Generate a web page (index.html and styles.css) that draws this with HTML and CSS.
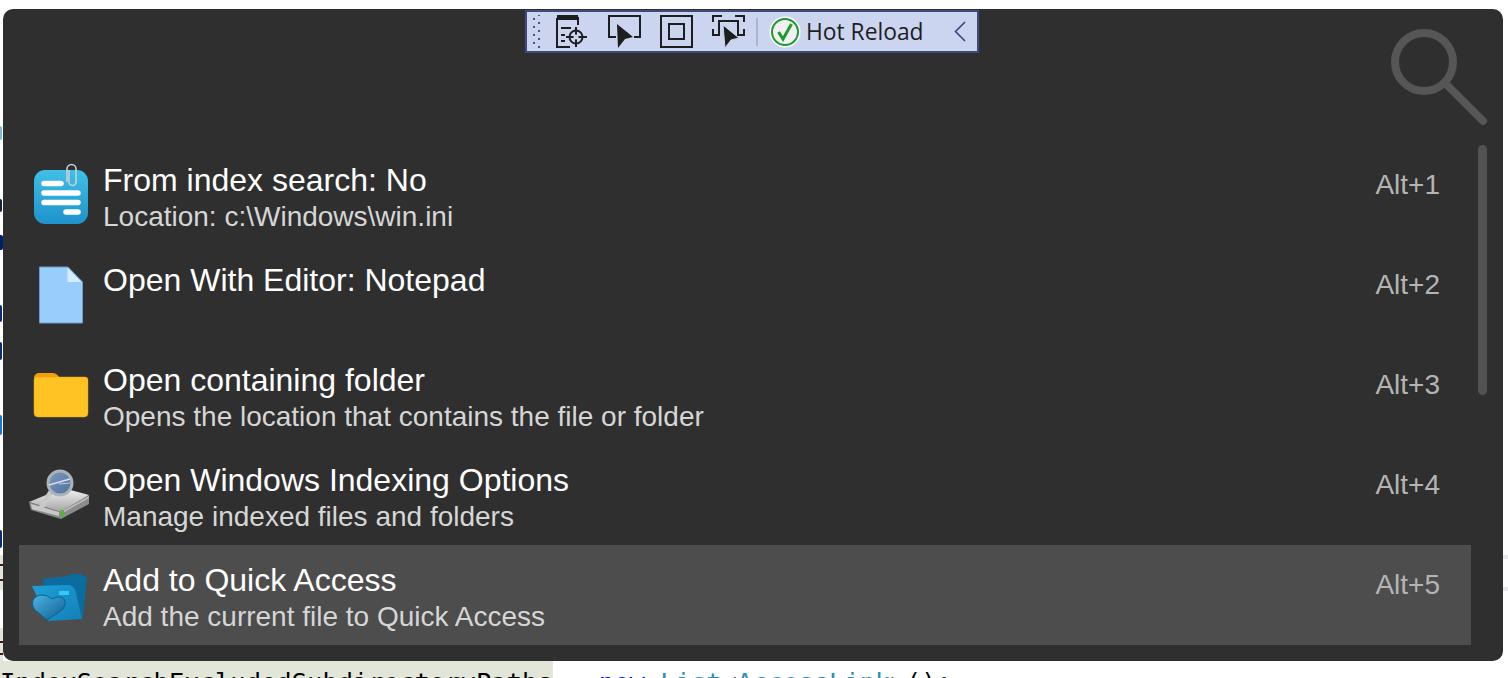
FILE: index.html
```html
<!DOCTYPE html>
<html lang="en">
<head>
<meta charset="utf-8">
<title>Flow Launcher</title>
<link rel="stylesheet" href="styles.css">
</head>
<body>
<div class="editor">
  <span class="frag f1"></span>
  <span class="frag f2"></span>
  <span class="frag f3"></span>
  <span class="frag f4"></span>
  <span class="frag f5"></span>
  <span class="frag f6"></span>
  <span class="frag f7"></span>
  <span class="hlblock h1"></span>
  <span class="hlblock h2"></span>
  <span class="mark m1"></span>
  <span class="mark m2"></span>
  <span class="mark m3"></span>
  <span class="mark m4"></span>
  <span class="rightmark r1"></span>
  <span class="rightmark r2"></span>
  <div class="codeline"><span class="hl">IndexSearchExcludedSubdirectoryPaths</span> = <span class="kw">new</span> <span class="ty">List</span>&lt;<span class="ty">AccessLink</span>&gt;();</div>
</div>

<main class="panel">
  <header class="head">
    <svg class="search" width="100" height="104" viewBox="0 0 100 104"><circle cx="36" cy="36" r="29" fill="none" stroke="#565656" stroke-width="8"/><path d="M59 59 95 95" stroke="#565656" stroke-width="8" stroke-linecap="round"/></svg>
  </header>
  <div class="body">
    <ul class="list">
      <li class="row">
        <span class="ico">
          <svg width="64" height="70" viewBox="0 0 64 70"><defs><linearGradient id="a" x1="0" y1="0" x2="0" y2="1"><stop offset="0" stop-color="#3fc0e6"/><stop offset="1" stop-color="#1f92cc"/></linearGradient></defs><rect x="6" y="10" width="54" height="54" rx="11" fill="url(#a)"/><g stroke="#fff" stroke-width="5.500" stroke-linecap="round"><path d="M16 23.500H33M16 33H50M16 42.500H50M38 52H50"/></g><path d="M39 22V9a4.500 4.500 0 0 1 9 0V22a3.500 3.500 0 0 1-7 0V10" fill="none" stroke="#c4d0d8" stroke-width="1.600"/></svg>
        </span>
        <div class="txt"><div class="title">From index search: No</div><div class="sub">Location: c:\Windows\win.ini</div></div>
        <span class="key">Alt+1</span>
      </li>
      <li class="row">
        <span class="ico">
          <svg width="64" height="70" viewBox="0 0 64 70"><path d="M11.500 7H40L54.500 22V63H11.500Z" fill="#99cdfb" stroke="#6f9cc4" stroke-width="1"/><path d="M39.500 8 53.500 22H39.500Z" fill="#d6ecff"/></svg>
        </span>
        <div class="txt"><div class="title">Open With Editor: Notepad</div><div class="sub">&nbsp;</div></div>
        <span class="key">Alt+2</span>
      </li>
      <li class="row">
        <span class="ico">
          <svg width="64" height="70" viewBox="0 0 64 70"><path d="M6 18a5 5 0 0 1 5-5h14q3 0 5 2.500l3 3.500H6Z" fill="#f59e0b"/><path d="M6 20a3 3 0 0 1 3-3H57a3 3 0 0 1 3 3V53a4 4 0 0 1-4 4H10a4 4 0 0 1-4-4Z" fill="#ffc423" stroke="#e0a21c" stroke-width=".5"/></svg>
        </span>
        <div class="txt"><div class="title">Open containing folder</div><div class="sub">Opens the location that contains the file or folder</div></div>
        <span class="key">Alt+3</span>
      </li>
      <li class="row">
        <span class="ico">
          <svg width="64" height="70" viewBox="0 0 64 70"><defs><linearGradient id="d" x1="0" y1="0" x2="0" y2="1"><stop offset="0" stop-color="#f4f4f4"/><stop offset="1" stop-color="#a4a4a4"/></linearGradient><linearGradient id="g" x1="0" y1="0" x2="1" y2="1"><stop offset="0" stop-color="#7f9cc0"/><stop offset="1" stop-color="#4f6f98"/></linearGradient></defs><path d="M1 42 35 28 61 35 33 52Z" fill="url(#d)"/><path d="M1 42 33 52 61 35 61 44 33 59 3 50Z" fill="#8b8b8b"/><path d="M3 44 31 52 31 56 4 49Z" fill="#c8c8c8"/><path d="M33 52 61 36 61 38 33 54Z" fill="#bdbdbd"/><rect x="33" y="50" width="3" height="7" fill="#45c12f"/><path d="M24 30 13 48" stroke="#c9c9c9" stroke-width="5"/><circle cx="32" cy="23" r="12" fill="url(#g)" stroke="#aab2bc" stroke-width="3"/><path d="M21 25 42 19" stroke="#d4e1f0" stroke-width="1.500"/><path d="M31 24 42 23" stroke="#b8cce2" stroke-width="1"/></svg>
        </span>
        <div class="txt"><div class="title">Open Windows Indexing Options</div><div class="sub">Manage indexed files and folders</div></div>
        <span class="key">Alt+4</span>
      </li>
      <li class="row sel">
        <span class="ico">
          <svg width="64" height="70" viewBox="0 0 64 70"><defs><linearGradient id="h" x1="0" y1="0" x2="1" y2="1"><stop offset="0" stop-color="#4bb4e4"/><stop offset="1" stop-color="#0f5f90"/></linearGradient><linearGradient id="f" x1="0" y1="0" x2="1" y2="1"><stop offset="0" stop-color="#1ea0d8"/><stop offset="1" stop-color="#1280b6"/></linearGradient></defs><path d="M14 19 40 16 41 14 54 14 55 16 59 17 55 57 28 60Z" fill="#0a6c9f"/><path d="M4 26 40 25Q46 25 48 33L54 59 20 61Z" fill="url(#f)"/><rect x="31" y="31" width="10" height="4" fill="#35c8f6"/><path d="M19 60 7 50Q3 45 5 40 8 35 14 35 20 35 24 39 28 36 33 37 38 39 37 45 36 49 31 52Z" fill="url(#h)" stroke="#0d5f8e" stroke-width="1"/></svg>
        </span>
        <div class="txt"><div class="title">Add to Quick Access</div><div class="sub">Add the current file to Quick Access</div></div>
        <span class="key">Alt+5</span>
      </li>
    </ul>
    <div class="track"><div class="thumb"></div></div>
  </div>
</main>

<nav class="toolbar">
  <span class="grip"></span>
  <svg class="tb" width="33" height="33" viewBox="0 0 33 33"><g fill="none" stroke="#1e1e1e" stroke-width="2"><path d="M1 3H22V10M1 3V32H14"/><path d="M1 2.500H22" stroke-width="5"/><path d="M5 13H15M5 20H9M5 26H9"/><circle cx="20" cy="22" r="6.500"/><path d="M20 12V32M10 22H31"/></g><circle cx="20" cy="22" r="2.500" fill="#ccd5f0"/></svg>
  <svg class="tb tb2" width="33" height="33" viewBox="0 0 33 33"><path d="M8 22H1V1H32V22H26" fill="none" stroke="#1e1e1e" stroke-width="2"/><path d="M9 9 25 22 17 24 10 33Z" fill="#1e1e1e"/></svg>
  <svg class="tb tb3" width="33" height="33" viewBox="0 0 33 33"><rect x="1" y="1" width="31" height="31" fill="none" stroke="#1e1e1e" stroke-width="2"/><rect x="9" y="9" width="15" height="15" fill="none" stroke="#1e1e1e" stroke-width="2"/></svg>
  <svg class="tb tb4" width="33" height="33" viewBox="0 0 33 33"><path d="M1 7V1H10M23 1H32V7M1 14V20H6M32 14V20H27M7 21V6H26V21" fill="none" stroke="#1e1e1e" stroke-width="2"/><path d="M11 10 27 23 19 25 13 33Z" fill="#1e1e1e" stroke="#ccd5f0" stroke-width="1"/></svg>
  <span class="sep"></span>
  <svg class="check" width="32" height="32" viewBox="0 0 32 32"><circle cx="16" cy="16" r="15.500" fill="#fff"/><circle cx="16" cy="16" r="13" fill="#f1f1f1" stroke="#1f9a2e" stroke-width="2"/><path d="M9.500 16 14 23 22.500 8" fill="none" stroke="#1f9a2e" stroke-width="3"/></svg>
  <span class="hot">Hot Reload</span>
  <svg class="chev" width="12" height="21" viewBox="0 0 12 21"><path d="M11 1 1.500 10.500 11 20" fill="none" stroke="#39467a" stroke-width="1.600"/></svg>
</nav>
</body>
</html>
```

FILE: styles.css
```css
html, body {
  margin: 0;
  padding: 0;
  height: 100%;
  overflow: hidden;
  background: #fff;
}

.editor {
  position: absolute;
  inset: 0;
  font-family: "DejaVu Sans Mono", monospace;
  font-size: 25.500px;
  color: #000;
}

.frag, .hlblock, .mark, .rightmark { position: absolute; left: 0; display: block; }
.frag { width: 3px; border-radius: 0 2px 2px 0; }
.f1 { top: 126px; height: 14px; width: 2px; background: #7dbdd0; }
.f2 { top: 199px; height: 13px; width: 2px; background: #16233d; }
.f3 { top: 235px; height: 15px; background: #00206b; }
.f4 { top: 305px; height: 17px; width: 2px; background: #0a2f78; }
.f5 { top: 342px; height: 18px; width: 2px; background: #0a2f78; }
.f6 { top: 415px; height: 20px; width: 2px; background: #1c78d8; }
.f7 { top: 530px; height: 18px; width: 2px; background: #0a2a7a; }

.hlblock { width: 3px; background: #e2e6d8; }
.h1 { top: 555px; height: 35px; }
.h2 { top: 628px; height: 33px; }
.mark { width: 3px; height: 2px; background: #4a1414; }
.m1 { top: 564px; }
.m2 { top: 579px; }
.m3 { top: 641px; }
.m4 { top: 653px; }

.rightmark { left: auto; right: 0; width: 5px; height: 4px; background: #e9e9f4; }
.r1 { top: 555px; }
.r2 { top: 587px; }

.codeline {
  position: absolute;
  left: 0;
  top: 661px;
  height: 17px;
  width: 1508px;
  line-height: 42px;
  white-space: pre;
  overflow: hidden;
}
.hl { background: #e2e6d8; display: inline-block; height: 17px; vertical-align: top; }
.kw { color: #0000ff; }
.ty { color: #2b91af; }

.panel {
  position: absolute;
  left: 3px;
  top: 9px;
  width: 1500px;
  height: 652px;
  border-radius: 10px;
  background: #2f2f2f;
  display: flex;
  flex-direction: column;
  overflow: hidden;
}

.head {
  height: 136px;
  display: flex;
  justify-content: flex-end;
  align-items: flex-start;
  padding: 17px 15px 0 0;
  box-sizing: border-box;
}

.body {
  display: flex;
  padding-left: 16px;
}

.list {
  list-style: none;
  margin: 0;
  padding: 0;
  width: 1452px;
}

.row {
  height: 100px;
  display: flex;
  align-items: flex-start;
  font-family: "Liberation Sans", Arial, sans-serif;
}
.row.sel { background: #4d4d4d; }

.ico {
  width: 84px;
  flex: none;
  padding: 15px 0 0 9px;
  box-sizing: border-box;
  height: 100px;
}
.ico svg { display: block; }

.txt { flex: 1; padding-top: 16px; }

.title {
  font-size: 32px;
  line-height: 38px;
  color: #fff;
}
.sub {
  font-size: 28px;
  line-height: 34px;
  padding-top: 1px;
  color: #d6d6d6;
}

.key {
  font-size: 28px;
  line-height: 30px;
  color: #b4b4b4;
  padding: 25px 31px 0 0;
}

.track { margin-left: 7px; height: 250px; }
.thumb {
  width: 9px;
  height: 250px;
  border-radius: 5px;
  background: #525252;
}

.toolbar {
  position: absolute;
  left: 525px;
  top: 10px;
  width: 454px;
  height: 43px;
  box-sizing: border-box;
  border: 2px solid #3f4b7d;
  background: #ccd5f0;
  display: flex;
  align-items: center;
  padding-left: 5px;
}

.grip {
  width: 10px;
  height: 34px;
  background-image:
    radial-gradient(circle, #4a5578 1px, transparent 1.200px),
    radial-gradient(circle, #4a5578 1px, transparent 1.200px);
  background-size: 10px 8px;
  background-position: -3px 0, 2px 4px;
  flex: none;
}
.tb { flex: none; margin-left: 14px; }
.tb2 { margin-left: 19px; }
.tb3 { margin-left: 19px; }
.tb4 { margin-left: 19px; }
.sep { width: 2px; height: 28px; background: #a9b4d0; margin: 0 11px 0 11px; flex: none; }
.check { flex: none; }
.hot {
  font-family: "Open Sans", sans-serif;
  font-size: 22.800px;
  color: #1e1e1e;
  margin-left: 5px;
  white-space: nowrap;
}
.chev { margin-left: 30px; flex: none; }
```
